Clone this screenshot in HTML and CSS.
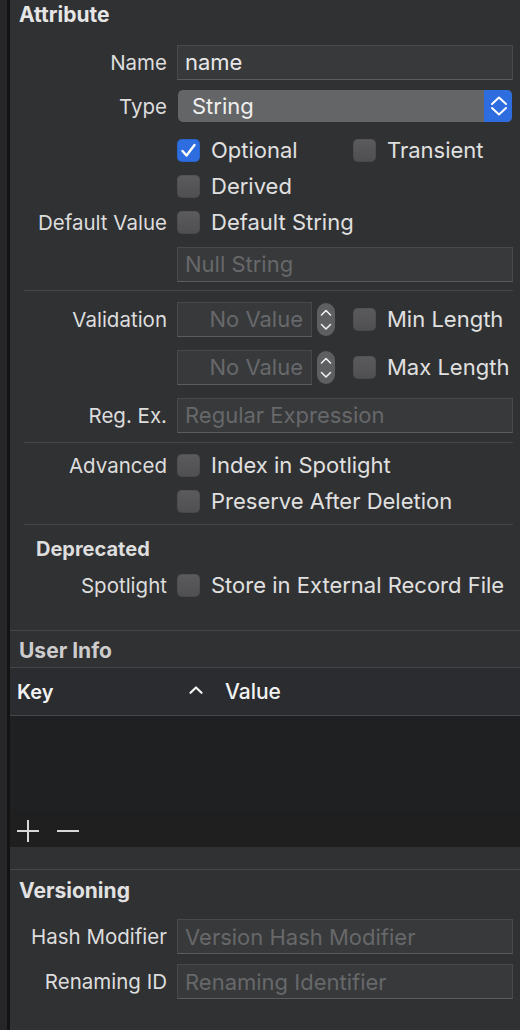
FILE: index.html
```html
<!DOCTYPE html>
<html lang="en">
<head>
<meta charset="utf-8">
<title>Attribute Inspector</title>
<link rel="stylesheet" href="styles.css">
</head>
<body>
<div class="app">
  <div class="gutter"></div>
  <div class="panel">
    <h2 class="title">Attribute</h2>
    <div class="form">
      <div class="row h44">
        <div class="lbl">Name</div>
        <div class="field"><span class="val">name</span></div>
      </div>
      <div class="row h44">
        <div class="lbl">Type</div>
        <div class="popup">
          <span class="popup-text">String</span>
          <span class="popup-arrows">
            <svg width="28" height="32" viewBox="0 0 28 32"><polyline points="8,14 15,7.5 22,14" fill="none" stroke="#fff" stroke-width="2" stroke-linecap="round" stroke-linejoin="round"/><polyline points="8,18 15,24.5 22,18" fill="none" stroke="#fff" stroke-width="2" stroke-linecap="round" stroke-linejoin="round"/></svg>
          </span>
        </div>
      </div>
      <div class="row h36 mt4">
        <div class="lbl"></div>
        <div class="controls">
          <div class="cb w176"><span class="box on"><svg width="23" height="23" viewBox="0 0 23 23"><polyline points="5.5,12 9.5,16.5 17.5,6" fill="none" stroke="#fff" stroke-width="2.4" stroke-linecap="round" stroke-linejoin="round"/></svg></span><span>Optional</span></div>
          <div class="cb"><span class="box"></span><span>Transient</span></div>
        </div>
      </div>
      <div class="row h36">
        <div class="lbl"></div>
        <div class="cb"><span class="box"></span><span>Derived</span></div>
      </div>
      <div class="row h36">
        <div class="lbl">Default Value</div>
        <div class="cb"><span class="box"></span><span>Default String</span></div>
      </div>
      <div class="row h48">
        <div class="lbl"></div>
        <div class="field"><span class="ph">Null String</span></div>
      </div>
      <div class="sep mt2 mb4"></div>
      <div class="row h48">
        <div class="lbl">Validation</div>
        <div class="controls">
          <div class="field num"><span class="ph">No Value</span></div>
          <div class="stepper"><svg width="18" height="33" viewBox="0 0 18 33"><polyline points="4.5,12 9,7.5 13.5,12" fill="none" stroke="#eee" stroke-width="1.6" stroke-linecap="round" stroke-linejoin="round"/><polyline points="4.5,21.5 9,26 13.5,21.5" fill="none" stroke="#eee" stroke-width="1.6" stroke-linecap="round" stroke-linejoin="round"/></svg></div>
          <div class="cb ml18"><span class="box"></span><span>Min Length</span></div>
        </div>
      </div>
      <div class="row h48">
        <div class="lbl"></div>
        <div class="controls">
          <div class="field num"><span class="ph">No Value</span></div>
          <div class="stepper"><svg width="18" height="33" viewBox="0 0 18 33"><polyline points="4.5,12 9,7.5 13.5,12" fill="none" stroke="#eee" stroke-width="1.6" stroke-linecap="round" stroke-linejoin="round"/><polyline points="4.5,21.5 9,26 13.5,21.5" fill="none" stroke="#eee" stroke-width="1.6" stroke-linecap="round" stroke-linejoin="round"/></svg></div>
          <div class="cb ml18"><span class="box"></span><span>Max Length</span></div>
        </div>
      </div>
      <div class="row h48">
        <div class="lbl">Reg. Ex.</div>
        <div class="field"><span class="ph">Regular Expression</span></div>
      </div>
      <div class="sep mt3 mb4"></div>
      <div class="row h36">
        <div class="lbl">Advanced</div>
        <div class="cb"><span class="box"></span><span>Index in Spotlight</span></div>
      </div>
      <div class="row h36">
        <div class="lbl"></div>
        <div class="cb"><span class="box"></span><span>Preserve After Deletion</span></div>
      </div>
      <div class="sep mt5 mb7"></div>
      <div class="subhead">Deprecated</div>
      <div class="row h38">
        <div class="lbl">Spotlight</div>
        <div class="cb"><span class="box"></span><span>Store in External Record File</span></div>
      </div>
    </div>

    <div class="ui-title">User Info</div>
    <div class="thead">
      <span class="key">Key</span>
      <svg class="sort" width="14" height="8" viewBox="0 0 14 8"><polyline points="1.5,6.8 7,1.5 12.5,6.8" fill="none" stroke="#f2f2f2" stroke-width="2.2" stroke-linecap="round" stroke-linejoin="round"/></svg>
      <span class="value">Value</span>
    </div>
    <div class="tbody"></div>
    <div class="tbar">
      <svg width="22" height="22" viewBox="0 0 22 22"><path d="M11 0V22M0 11H22" stroke="#d8d8d8" stroke-width="2"/></svg>
      <svg width="22" height="22" viewBox="0 0 22 22"><path d="M0 11H22" stroke="#d8d8d8" stroke-width="2"/></svg>
    </div>
    <div class="spacer"></div>

    <div class="v-title">Versioning</div>
    <div class="form form-v">
      <div class="row h45">
        <div class="lbl">Hash Modifier</div>
        <div class="field"><span class="ph">Version Hash Modifier</span></div>
      </div>
      <div class="row h45">
        <div class="lbl">Renaming ID</div>
        <div class="field"><span class="ph">Renaming Identifier</span></div>
      </div>
    </div>
  </div>
</div>
</body>
</html>
```
FILE: styles.css
```css
* { box-sizing: border-box; }

html, body {
  margin: 0;
  background: #303133;
}

body {
  font-family: Inter, "Noto Sans", "Liberation Sans", sans-serif;
  font-size: 20px;
  color: #dedede;
}

.app {
  display: flex;
  min-height: 1030px;
}

.gutter {
  flex: none;
  width: 10px;
  background: #262628;
  border-right: 3px solid #131314;
}

.panel {
  flex: 1;
  background: #303133;
}

.title {
  margin: 0;
  height: 30px;
  line-height: 30px;
  padding-left: 9px;
  font-size: 21px;
  font-weight: 700;
  color: #e6e6e6;
}

.form {
  padding: 10px 7px 0 0;
}

.row {
  display: grid;
  grid-template-columns: 157px 1fr;
  column-gap: 10px;
  align-items: center;
}

.h36 { height: 36px; }
.h38 { height: 38px; }
.h44 { height: 44px; }
.h45 { height: 45px; }
.h48 { height: 48px; }
.mt2 { margin-top: 2px; }
.mt3 { margin-top: 3px; }
.mt4 { margin-top: 4px; }
.mt5 { margin-top: 5px; }
.mb4 { margin-bottom: 4px; }
.mb7 { margin-bottom: 7px; }
.ml18 { margin-left: 18px; }

.lbl {
  text-align: right;
  font-size: 20.5px;
  color: #dddddd;
  white-space: nowrap;
}

.field {
  height: 35px;
  background: #38393b;
  border: 1px solid #48494b;
  border-bottom-color: #5b5c5e;
  padding: 0 7px;
  display: flex;
  align-items: center;
  white-space: nowrap;
  overflow: hidden;
  font-size: 22px;
}

.val { color: #e8e8e8; }
.ph { color: #67686a; }

.field.num {
  width: 135px;
  flex: none;
  justify-content: flex-end;
  padding-right: 8px;
}

.popup {
  height: 32px;
  margin-left: 1px;
  margin-right: 1px;
  border-radius: 5px;
  background: #646567;
  display: flex;
  align-items: center;
  overflow: hidden;
}

.popup-text {
  flex: 1;
  padding-left: 14px;
  font-size: 22px;
  color: #efefef;
}

.popup-arrows {
  width: 28px;
  height: 32px;
  background: #2d6de0;
  display: flex;
}

.controls {
  display: flex;
  align-items: center;
}

.cb {
  display: flex;
  align-items: center;
  gap: 11px;
  white-space: nowrap;
  font-size: 22px;
  color: #e0e0e0;
}

.w176 { width: 176px; flex: none; }

.box {
  flex: none;
  width: 23px;
  height: 23px;
  border-radius: 5px;
  background: linear-gradient(#5b5b5d, #4f4f51);
  box-shadow: inset 0 0 0 1px rgba(0, 0, 0, 0.08);
  display: flex;
}

.box.on {
  background: #2d6de0;
}

.stepper {
  flex: none;
  width: 18px;
  height: 33px;
  margin-left: 5px;
  border-radius: 9px;
  background: #5e5f61;
  display: flex;
}

.sep {
  height: 1px;
  margin-left: 14px;
  background: #454648;
}

.subhead {
  height: 34px;
  padding-left: 26px;
  display: flex;
  align-items: center;
  font-weight: 700;
  color: #dedede;
}

.ui-title {
  margin-top: 26px;
  height: 38px;
  line-height: 40px;
  padding-left: 9px;
  border-top: 1px solid #454648;
  border-bottom: 1px solid #454648;
  font-size: 21px;
  font-weight: 700;
  color: #cdcdcd;
  overflow: hidden;
}

.thead {
  height: 48px;
  background: #2a2c2f;
  border-bottom: 1px solid #46474a;
  display: flex;
  align-items: center;
  color: #f2f2f2;
}

.key {
  width: 179px;
  padding-left: 7px;
  font-weight: 600;
}

.sort {
  flex: none;
  margin-right: 22px;
  margin-top: -3px;
}

.value {
  font-size: 21px;
  font-weight: 500;
}

.tbody {
  height: 96px;
  background: #1f2021;
}

.tbar {
  height: 35px;
  background: #1f1f1f;
  display: flex;
  align-items: center;
  gap: 18px;
  padding: 3px 0 0 7px;
}

.spacer {
  height: 22px;
}

.v-title {
  height: 45px;
  border-top: 1px solid #454648;
  padding-left: 9px;
  line-height: 41px;
  font-size: 21px;
  font-weight: 700;
  color: #e2e2e2;
}

.form-v {
  padding-top: 0;
}
```
